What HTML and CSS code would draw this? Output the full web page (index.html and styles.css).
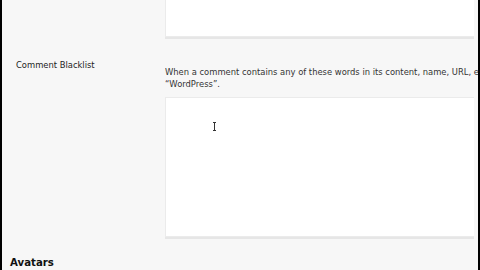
FILE: index.html
```html
<!DOCTYPE html>
<html>
<head>
<meta charset="utf-8">
<link rel="stylesheet" href="styles.css">
</head>
<body>
<div class="frame">
  <div class="page">
    <div class="row row-top">
      <div class="label"></div>
      <div class="field">
        <div class="textarea textarea-top"></div>
      </div>
    </div>
    <div class="row row-blacklist">
      <div class="label">Comment Blacklist</div>
      <div class="field">
        <p class="desc">When a comment contains any of these words in its content, name, URL, e-mail, or IP, it will be marked as spam. One word or IP per line. It will match inside words, so “press” will match<br>“WordPress”.</p>
        <div class="textarea textarea-main"><span class="ibeam"></span></div>
      </div>
    </div>
    <h3 class="section">Avatars</h3>
  </div>
</div>
</body>
</html>
```

FILE: styles.css
```css
html, body {
  margin: 0;
  padding: 0;
  width: 480px;
  height: 270px;
  overflow: hidden;
  background: #000;
}
.frame {
  margin: 0 2px;
  height: 270px;
  background: #f7f7f7;
  overflow: hidden;
  font-family: "DejaVu Sans", Verdana, sans-serif;
  color: #333;
}
.page {
  width: 476px;
  overflow: hidden;
}
.row {
  display: grid;
  grid-template-columns: 163px 1fr;
}
.label {
  font-size: 8.4px;
  line-height: 10px;
  padding-left: 14px;
  color: #222;
}
.row-blacklist .label {
  padding-top: 23px;
}
.field {
  min-width: 0;
  white-space: nowrap;
}
.textarea {
  background: #fff;
  border: 1px solid #ebebeb;
  border-right: none;
  box-shadow: 0 2px 0 #e6e6e6;
  width: 308px;
  position: relative;
}
.textarea-top {
  height: 36px;
  border-top: none;
}
.desc {
  margin: 29px 0 0 0;
  font-size: 8.4px;
  line-height: 12px;
  white-space: nowrap;
  color: #333;
  height: 24px;
  overflow: hidden;
}
.textarea-main {
  height: 138px;
  margin-top: 7px;
}
.ibeam {
  position: absolute;
  left: 48px;
  top: 24px;
  width: 1px;
  height: 9px;
  background: #333;
}
.ibeam::before, .ibeam::after {
  content: "";
  position: absolute;
  left: -1px;
  width: 3px;
  height: 1px;
  background: #333;
}
.ibeam::before { top: 0; }
.ibeam::after { bottom: 0; }
.section {
  margin: 20px 0 0 8px;
  font-size: 10.2px;
  line-height: 12px;
  font-weight: bold;
  color: #111;
}
```
